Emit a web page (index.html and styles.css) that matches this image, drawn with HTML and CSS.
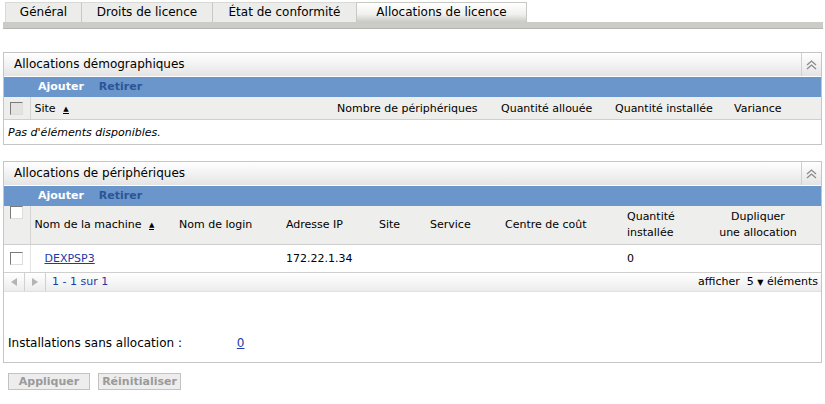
FILE: index.html
```html
<!DOCTYPE html>
<html lang="fr">
<head>
    <meta charset="UTF-8">
    <title>Allocations de licence</title>
    <link rel="stylesheet" href="styles.css">
</head>
<body>
    <div class="tabs">
        <div class="tab tab-general">Général</div>
        <div class="tab tab-droits">Droits de licence</div>
        <div class="tab tab-etat">État de conformité</div>
        <div class="tab tab-alloc active">Allocations de licence</div>
    </div>
    <div class="tab-strip"></div>

    <div class="panel panel-demo">
        <div class="panel-head">
            <span class="panel-title">Allocations démographiques</span>
            <span class="collapse">
                <svg width="11" height="10" viewBox="0 0 11 10"><path d="M1 5 L5.5 1 L10 5 M1 9 L5.5 5 L10 9" fill="none" stroke="#8a8a8a" stroke-width="1.3"/></svg>
            </span>
        </div>
        <div class="toolbar"><span class="add">Ajouter</span><span class="remove">Retirer</span></div>
        <table class="grid">
            <colgroup>
                <col class="c-check"><col style="width:303px"><col style="width:164px"><col style="width:114px"><col style="width:119px"><col>
            </colgroup>
            <tr class="head">
                <th class="check"><span class="box grey"></span></th>
                <th>Site <span class="sort">&#9650;</span></th>
                <th>Nombre de périphériques</th>
                <th>Quantité allouée</th>
                <th>Quantité installée</th>
                <th>Variance</th>
            </tr>
            <tr class="empty">
                <td colspan="6">Pas d'éléments disponibles.</td>
            </tr>
        </table>
    </div>

    <div class="panel panel-dev">
        <div class="panel-head">
            <span class="panel-title">Allocations de périphériques</span>
            <span class="collapse">
                <svg width="11" height="10" viewBox="0 0 11 10"><path d="M1 5 L5.5 1 L10 5 M1 9 L5.5 5 L10 9" fill="none" stroke="#8a8a8a" stroke-width="1.3"/></svg>
            </span>
        </div>
        <div class="toolbar"><span class="add">Ajouter</span><span class="remove">Retirer</span></div>
        <table class="grid">
            <colgroup>
                <col class="c-check"><col style="width:145px"><col style="width:107px"><col style="width:93px"><col style="width:51px"><col style="width:75px"><col style="width:122px"><col style="width:86px"><col>
            </colgroup>
            <tr class="head tall">
                <th class="check top"><span class="box"></span></th>
                <th>Nom de la machine <span class="sort">&#9650;</span></th>
                <th>Nom de login</th>
                <th>Adresse IP</th>
                <th>Site</th>
                <th>Service</th>
                <th>Centre de coût</th>
                <th>Quantité<br>installée</th>
                <th class="center">Dupliquer<br>une allocation</th>
            </tr>
            <tr class="row">
                <td class="check top"><span class="box"></span></td>
                <td class="machine"><a href="#">DEXPSP3</a></td>
                <td></td>
                <td>172.22.1.34</td>
                <td></td>
                <td></td>
                <td></td>
                <td>0</td>
                <td></td>
            </tr>
        </table>
        <div class="pager">
            <span class="pg-btn"><svg width="6" height="8" viewBox="0 0 6 8"><path d="M6 0 L0 4 L6 8Z" fill="#b4b4b4"/></svg></span>
            <span class="pg-btn"><svg width="6" height="8" viewBox="0 0 6 8"><path d="M0 0 L6 4 L0 8Z" fill="#b4b4b4"/></svg></span>
            <span class="pg-info">1 - 1 sur 1</span>
            <span class="pg-size">afficher&nbsp; 5 <span class="caret">&#9660;</span> éléments</span>
        </div>
        <div class="summary">
            <span class="sum-label">Installations sans allocation :</span>
            <a href="#">0</a>
        </div>
    </div>

    <div class="buttons">
        <button class="btn btn-apply" disabled>Appliquer</button>
        <button class="btn btn-reset" disabled>Réinitialiser</button>
    </div>
</body>
</html>
```
FILE: styles.css
```css
body {
    margin: 0;
    padding: 0;
    background-color: #fff;
    font-family: "DejaVu Sans", Verdana, sans-serif;
    font-size: 12px;
    color: #000;
}
.tabs {
    display: flex;
    padding: 2px 0 0 5px;
    height: 20px;
}
.tab {
    height: 20px;
    line-height: 19px;
    text-align: center;
    font-size: 12px;
    background: #ececea;
    border-right: 1px solid #c8c8c4;
    border-top: 1px solid #d8d8d4;
    box-sizing: border-box;
}
.tab-general { width: 77px; border-left: 1px solid #d8d8d4; }
.tab-droits { width: 131px; }
.tab-etat { width: 144px; }
.tab-alloc { width: 170px; }
.tab.active {
    background: linear-gradient(#ffffff, #f0f0ee 60%, #c9cbc6);
    border-top: 1px solid #c8c8c4;
}
.tab-strip {
    margin: 0 2px 0 3px;
    height: 6px;
    background: #cbccc8;
    border-bottom: 1px solid #b4b4b0;
}
.panel {
    margin: 0 3px 0 3px;
    border: 1px solid #c5c5c5;
}
.panel-demo { margin-top: 23px; }
.panel-dev { margin-top: 16px; }
.panel-head {
    display: flex;
    justify-content: space-between;
    height: 23px;
    background: linear-gradient(#ffffff, #f2f2f2 50%, #e4e4e4);
    border-bottom: 1px solid #fff;
}
.panel-title {
    line-height: 23px;
    padding-left: 10px;
    font-size: 12px;
}
.collapse {
    width: 19px;
    border-left: 1px solid #d0d0d0;
    display: flex;
    align-items: center;
    justify-content: center;
}
.toolbar {
    height: 20px;
    line-height: 20px;
    background: #6a96cc;
    padding-left: 34px;
    font-size: 11px;
    font-weight: bold;
}
.toolbar .add { color: #fff; margin-right: 15px; }
.toolbar .remove { color: #2c5596; }
.grid {
    width: 100%;
    border-collapse: collapse;
    table-layout: fixed;
}
.c-check { width: 26px; }
.grid th {
    font-weight: normal;
    text-align: left;
    background: #eeeeec;
    height: 22px;
    padding: 0 0 0 4px;
    border-bottom: 1px solid #cfcfcf;
    white-space: nowrap;
    font-size: 11px;
}
.grid th.check, .grid td.check {
    padding: 0 0 0 6px;
    border-right: 1px solid #d4d4d4;
}
.grid td.check { border-right: 1px solid #e4e4e4; }
.grid .top { vertical-align: top; padding-top: 6px; }
.grid th.center { text-align: center; padding-left: 0; padding-right: 14px; }
.head.tall { height: 38px; }
.head.tall th { height: auto; line-height: 16px; }
.box {
    display: block;
    width: 11px;
    height: 11px;
    border: 1px solid #7a7a7a;
    border-right-color: #ddd;
    border-bottom-color: #ddd;
    background: #fff;
}
.box.grey { background: #e4e3df; }
.sort {
    font-size: 7px;
    vertical-align: middle;
    margin-left: 4px;
    border-bottom: 1px solid #000;
}
.empty td {
    height: 22px;
    padding-left: 4px;
    font-style: italic;
    font-size: 11px;
}
.row { height: 28px; }
.row td {
    padding-left: 4px;
    border-bottom: 1px solid #cfcfcf;
    font-size: 11px;
}
.row td.check { padding-top: 7px; }
.row td.machine { padding-left: 14px; }
a { color: #1c3aa8; }
.pager {
    display: flex;
    align-items: center;
    height: 18px;
    background: linear-gradient(#ffffff, #ececec);
    font-size: 11px;
    border-bottom: 1px solid #e0e0e0;
}
.pg-btn {
    width: 20px;
    height: 18px;
    border-right: 1px solid #d0d0d0;
    display: flex;
    align-items: center;
    justify-content: center;
}
.pg-info { padding-left: 6px; color: #1c3aa8; }
.pg-size { margin-left: auto; padding-right: 3px; }
.caret { font-size: 8px; }
.summary {
    padding: 44px 0 12px 4px;
    font-size: 12px;
}
.sum-label { display: inline-block; width: 225px; }
.buttons {
    display: flex;
    gap: 8px;
    padding: 10px 0 0 8px;
}
.btn {
    height: 17px;
    padding: 0;
    font-family: inherit;
    font-size: 11px;
    font-weight: bold;
    color: #9a9a9a;
    background: #ededed;
    border: 1px solid #c2c2c2;
}
.btn-apply { width: 82px; }
.btn-reset { width: 83px; }
```
